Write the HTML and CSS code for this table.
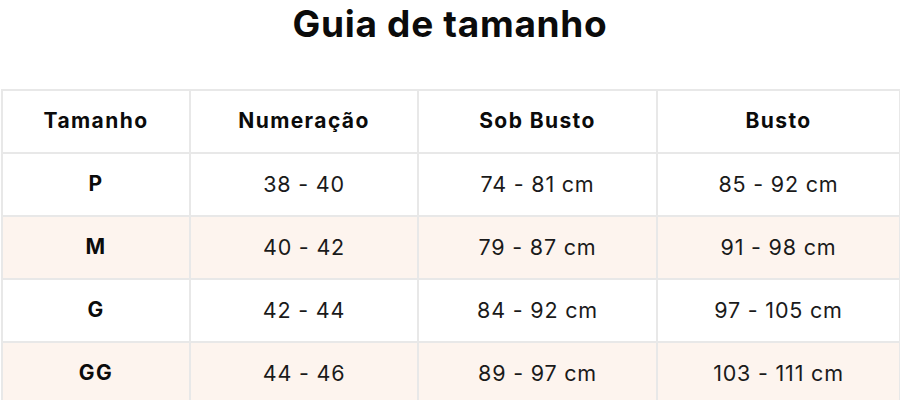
FILE: index.html
```html
<!DOCTYPE html>
<html lang="pt-BR">
<head>
<meta charset="utf-8">
<title>Guia de tamanho</title>
<link rel="stylesheet" href="styles.css">
</head>
<body>
<main class="guide">
  <h1 class="guide-title">Guia de tamanho</h1>
  <table class="size-table">
    <colgroup>
      <col class="c1"><col class="c2"><col class="c3"><col class="c4">
    </colgroup>
    <thead>
      <tr><th>Tamanho</th><th>Numeração</th><th>Sob Busto</th><th>Busto</th></tr>
    </thead>
    <tbody>
      <tr><th>P</th><td>38 - 40</td><td>74 - 81 cm</td><td>85 - 92 cm</td></tr>
      <tr class="alt"><th>M</th><td>40 - 42</td><td>79 - 87 cm</td><td>91 - 98 cm</td></tr>
      <tr><th>G</th><td>42 - 44</td><td>84 - 92 cm</td><td>97 - 105 cm</td></tr>
      <tr class="alt"><th>GG</th><td>44 - 46</td><td>89 - 97 cm</td><td>103 - 111 cm</td></tr>
    </tbody>
  </table>
</main>
</body>
</html>
```
FILE: styles.css
```css
html, body {
  margin: 0;
  padding: 0;
  background: #ffffff;
}
body {
  font-family: "Inter", "Liberation Sans", sans-serif;
  color: #111111;
}
.guide {
  padding: 0 1px 0 1px;
}
.guide-title {
  margin: 0;
  height: 89px;
  text-align: center;
  font-size: 37px;
  font-weight: 700;
  line-height: 48px;
  letter-spacing: 0.7px;
  color: #0b0b0b;
}
.size-table {
  width: 898px;
  border-collapse: collapse;
  table-layout: fixed;
}
.c1 { width: 188px; }
.c2 { width: 228px; }
.c3 { width: 239px; }
.c4 { width: 243px; }
.size-table th,
.size-table td {
  border: 2px solid #e8e8e8;
  height: 59px;
  padding: 0 0 2px 0;
  text-align: center;
  vertical-align: middle;
}
.size-table th {
  font-weight: 700;
  font-size: 21px;
  letter-spacing: 1.4px;
  color: #0b0b0b;
}
.size-table td {
  font-weight: 400;
  font-size: 21.5px;
  letter-spacing: 0.8px;
  color: #1a1a1a;
}
.size-table tr.alt {
  background: #fdf4ee;
}
```
